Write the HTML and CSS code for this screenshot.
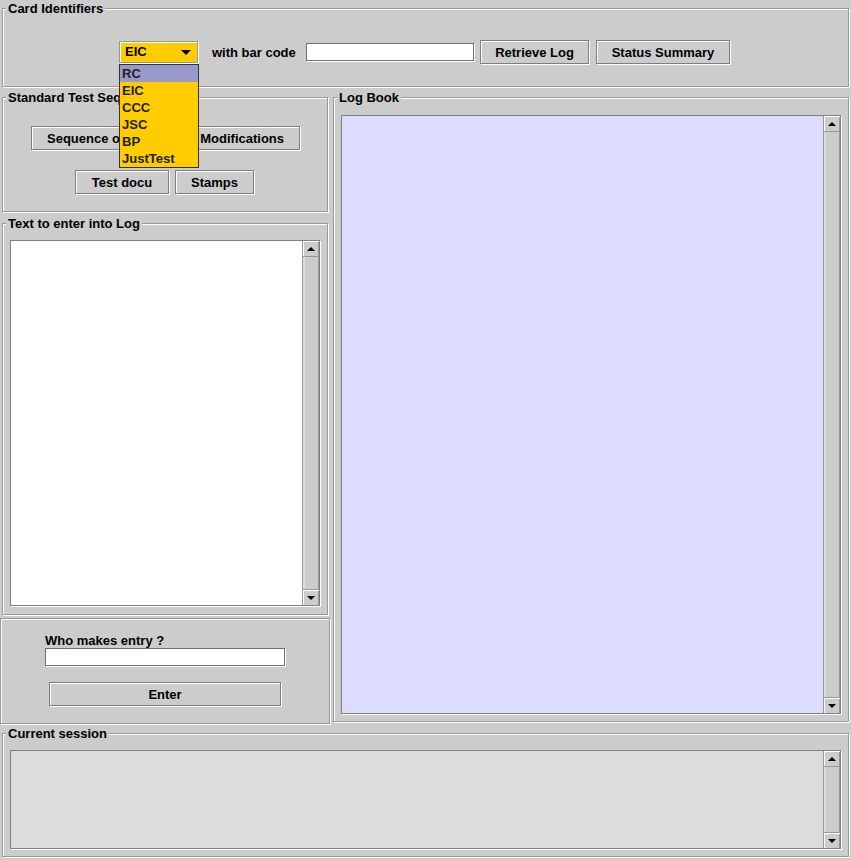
FILE: index.html
```html
<!DOCTYPE html>
<html lang="en">
<head>
    <meta charset="UTF-8">
    <title>Log Book</title>
    <link rel="stylesheet" href="styles.css">
</head>
<body>
<div class="frame">
    <fieldset class="group card-ids">
        <legend>Card Identifiers</legend>
        <div class="id-row">
            <div class="combo"><span class="combo-value">EIC</span><span class="arrow-down"></span></div>
            <span class="bar-label">with bar code</span>
            <input class="field bar-field" type="text">
            <button class="btn btn-retrieve">Retrieve Log</button>
            <button class="btn btn-status">Status Summary</button>
        </div>
    </fieldset>

    <div class="main">
        <div class="left-col">
            <fieldset class="group std-seq">
                <legend>Standard Test Sequence</legend>
                <div class="btn-row row-1">
                    <button class="btn btn-seq">Sequence of <span class="seq-mid">Tests and</span> Modifications</button>
                </div>
                <div class="btn-row row-2">
                    <button class="btn btn-docu">Test docu</button>
                    <button class="btn btn-stamps">Stamps</button>
                </div>
            </fieldset>

            <fieldset class="group entry-text">
                <legend>Text to enter into Log</legend>
                <div class="group-body">
                    <div class="scroll-pane entry-pane">
                        <div class="scroll-view view-white"></div>
                        <div class="vscroll">
                            <div class="scroll-btn btn-up"><span class="arrow-up"></span></div>
                            <div class="scroll-track"></div>
                            <div class="scroll-btn btn-down"><span class="arrow-small-down"></span></div>
                        </div>
                    </div>
                </div>
            </fieldset>

            <div class="who-panel">
                <div class="who-label">Who makes entry ?</div>
                <input class="field who-field" type="text">
                <button class="btn btn-enter">Enter</button>
            </div>
        </div>

        <fieldset class="group log-book">
            <legend>Log Book</legend>
            <div class="group-body">
                <div class="scroll-pane log-pane">
                    <div class="scroll-view view-lavender"></div>
                    <div class="vscroll">
                        <div class="scroll-btn btn-up"><span class="arrow-up"></span></div>
                        <div class="scroll-track"></div>
                        <div class="scroll-btn btn-down"><span class="arrow-small-down"></span></div>
                    </div>
                </div>
            </div>
        </fieldset>
    </div>

    <fieldset class="group session">
        <legend>Current session</legend>
        <div class="group-body">
            <div class="scroll-pane session-pane">
                <div class="scroll-view view-gray"></div>
                <div class="vscroll">
                    <div class="scroll-btn btn-up"><span class="arrow-up"></span></div>
                    <div class="scroll-track"></div>
                    <div class="scroll-btn btn-down"><span class="arrow-small-down"></span></div>
                </div>
            </div>
        </div>
    </fieldset>

    <!-- open combo box list -->
    <ul class="combo-popup">
        <li class="selected">RC</li>
        <li>EIC</li>
        <li>CCC</li>
        <li>JSC</li>
        <li>BP</li>
        <li>JustTest</li>
    </ul>
</div>
</body>
</html>
```

FILE: styles.css
```css
body {
    margin: 0;
    background: #cccccc;
    font: bold 13px "Liberation Sans", Arial, sans-serif;
    color: #000;
}

.frame {
    position: relative;
    width: 851px;
    height: 860px;
    overflow: hidden;
}

/* titled etched border */
.group {
    box-sizing: border-box;
    margin: 0 0 0 2px;
    padding: 0;
    min-width: 0;
    border: 1px solid #999999;
    box-shadow: inset 1px 1px 0 #fff, 1px 1px 0 #fff;
}

.group legend {
    margin-left: 3px;
    padding: 0 2px;
    line-height: 17px;
    background: #cccccc;
}

.card-ids {
    width: 847px;
    height: 87px;
}

.id-row {
    display: flex;
    align-items: center;
    justify-content: center;
    height: 24px;
    margin-top: 23px;
    padding-right: 2px;
}

.combo {
    box-sizing: border-box;
    width: 79px;
    height: 22px;
    margin-right: 14px;
    padding: 0 6px 0 5px;
    display: flex;
    align-items: center;
    justify-content: space-between;
    background: #ffcc00;
    border: 1px solid #999999;
    box-shadow: inset 1px 1px 0 #fff, 1px 1px 0 #fff;
    line-height: 20px;
}

.arrow-down {
    width: 0;
    height: 0;
    border-left: 5px solid transparent;
    border-right: 5px solid transparent;
    border-top: 5px solid #000;
}

.bar-label {
    width: 94px;
}

.field {
    box-sizing: border-box;
    height: 18px;
    margin: 0;
    padding: 0 2px;
    border: 1px solid #707070;
    box-shadow: 1px 1px 0 #fff;
    background: #fff;
    font: inherit;
    outline: none;
}

.bar-field {
    width: 168px;
    margin-right: 6px;
}

.btn {
    box-sizing: border-box;
    height: 24px;
    margin: 0;
    padding: 0;
    background: #cccccc;
    border: 1px solid #7d7d7d;
    box-shadow: inset 1px 1px 0 #fff, 1px 1px 0 #fff;
    font: inherit;
    color: #000;
    white-space: nowrap;
    overflow: hidden;
}

.btn-retrieve {
    width: 109px;
    margin-right: 7px;
}

.btn-status {
    width: 134px;
}

.main {
    display: flex;
    align-items: flex-start;
    margin-top: 2px;
}

.left-col {
    width: 331px;
    display: flex;
    flex-direction: column;
}

.std-seq {
    width: 326px;
    height: 123px;
}

.btn-row {
    display: flex;
    justify-content: center;
}

.row-1 {
    margin-top: 20px;
    padding-left: 1px;
}

.row-2 {
    margin-top: 20px;
    padding-right: 1px;
}

.btn-seq {
    width: 269px;
}

.seq-mid {
    letter-spacing: 1px;
}

.btn-docu {
    width: 94px;
    margin-right: 6px;
}

.btn-stamps {
    width: 79px;
}

.entry-text {
    width: 326px;
    height: 400px;
    margin-top: 3px;
}

.entry-text .group-body,
.session .group-body {
    padding: 8px 0 0 7px;
}

.log-book .group-body {
    padding: 9px 0 0 7px;
}

.who-panel {
    box-sizing: border-box;
    width: 330px;
    height: 106px;
    margin-top: 3px;
    padding: 14px 0 0 44px;
    border: 1px solid #999999;
    box-shadow: inset 1px 1px 0 #fff, 1px 1px 0 #fff;
    display: flex;
    flex-direction: column;
    align-items: flex-start;
}

.who-label {
    line-height: 15px;
}

.who-field {
    width: 240px;
}

.btn-enter {
    width: 232px;
    margin: 16px 0 0 4px;
}

.log-book {
    width: 516px;
    height: 633px;
}

.session {
    width: 847px;
    height: 132px;
    margin-top: 1px;
}

/* scroll panes */
.scroll-pane {
    box-sizing: border-box;
    display: flex;
    border: 1px solid #808080;
    box-shadow: 1px 1px 0 #fff;
}

.entry-pane {
    width: 310px;
    height: 366px;
}

.log-pane {
    width: 500px;
    height: 599px;
}

.session-pane {
    width: 831px;
    height: 99px;
}

.scroll-view {
    flex: 1;
}

.view-white {
    background: #ffffff;
}

.view-lavender {
    background: #dcdcff;
}

.view-gray {
    background: #dcdcdc;
}

.vscroll {
    box-sizing: border-box;
    width: 17px;
    display: flex;
    flex-direction: column;
    border-left: 1px solid #999999;
    background: #cccccc;
}

.scroll-btn {
    box-sizing: border-box;
    height: 16px;
    display: flex;
    align-items: center;
    justify-content: center;
    box-shadow: inset 1px 1px 0 #fff, inset -1px 0 0 #999;
}

.btn-up {
    border-bottom: 1px solid #999999;
}

.btn-down {
    border-top: 1px solid #999999;
}

.scroll-track {
    flex: 1;
    box-shadow: inset 2px 0 0 #dddddd, inset -1px 0 0 #999;
}

.arrow-up {
    width: 0;
    height: 0;
    border-left: 4px solid transparent;
    border-right: 4px solid transparent;
    border-bottom: 4px solid #000;
}

.arrow-small-down {
    width: 0;
    height: 0;
    border-left: 4px solid transparent;
    border-right: 4px solid transparent;
    border-top: 4px solid #000;
}

/* open list of the combo box */
.combo-popup {
    position: absolute;
    left: 119px;
    top: 64px;
    box-sizing: border-box;
    width: 80px;
    height: 104px;
    margin: 0;
    padding: 0;
    list-style: none;
    background: #ffcc00;
    border: 1px solid #333333;
}

.combo-popup li {
    height: 17px;
    line-height: 17px;
    padding-left: 2px;
    color: #222;
}

.combo-popup li.selected {
    background: #9999cc;
}
```
